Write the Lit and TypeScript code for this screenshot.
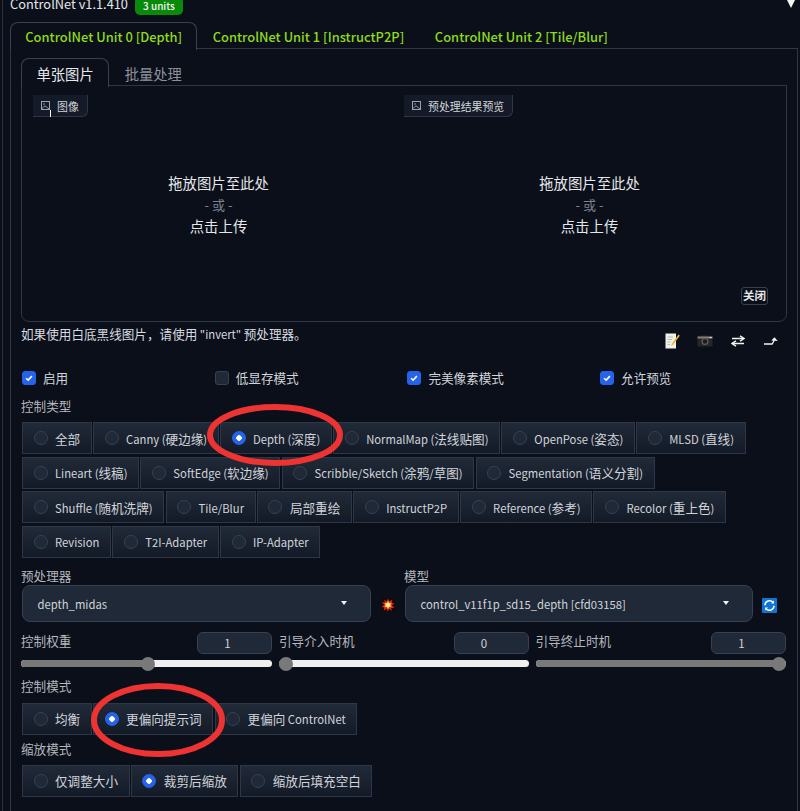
import { LitElement, html, css, svg } from "lit";
import { customElement } from "lit/decorators.js";

const typeRows = [
  ["全部", "Canny (硬边缘)", "Depth (深度)", "NormalMap (法线贴图)", "OpenPose (姿态)", "MLSD (直线)"],
  ["Lineart (线稿)", "SoftEdge (软边缘)", "Scribble/Sketch (涂鸦/草图)", "Segmentation (语义分割)"],
  ["Shuffle (随机洗牌)", "Tile/Blur", "局部重绘", "InstructP2P", "Reference (参考)", "Recolor (重上色)"],
  ["Revision", "T2I-Adapter", "IP-Adapter"],
];

/* Latin runs are set a little smaller than CJK runs, as in the reference. */
const mixed = (text: string) =>
  text
    .split(/([\x20-\x7e]+)/)
    .map((part, i) => (i % 2 ? html`<span class="lat">${part}</span>` : part));

const picIcon = svg`<svg class="pic" viewBox="0 0 10 10" width="10" height="10"><rect x=".5" y=".5" width="8" height="8" fill="none" stroke="#9ca3af" stroke-width="1"/><circle cx="3" cy="3" r=".8" fill="#9ca3af"/><path d="M1 7.500 L4 4.800 L8 8" fill="none" stroke="#9ca3af" stroke-width=".9"/></svg>`;

const boom = svg`<svg viewBox="0 0 14 14" width="14" height="14"><rect width="14" height="14" fill="#12090c"/><path d="M7 0.500 8.300 3.600 11.500 1.500 10.500 5 13.500 5.500 10.900 7.300 13.500 10 10 9.800 10.800 13 8 10.800 6.800 13.700 5.700 10.600 2.500 12.800 3.600 9.400 .5 9 3.300 7 .7 4.200 4.200 4.800 3 1.500 5.800 3.800Z" fill="#e0281f"/><path d="M7 2.800 8.300 5 10.700 4.800 9.600 7 10.700 9.200 8.300 9 7 11.200 5.700 9 3.300 9.200 4.400 7 3.300 4.800 5.700 5Z" fill="#ffb52e"/><circle cx="7" cy="7" r="2" fill="#fff3b8"/></svg>`;

const refresh = svg`<svg viewBox="0 0 15 15" width="15" height="15"><rect width="15" height="15" rx="1" fill="#1173d8"/><path d="M3 7.200A4.600 4.600 0 0 1 11 4.200" fill="none" stroke="#fff" stroke-width="1.500"/><path d="M12 2.400V5.600H8.900Z" fill="#fff"/><path d="M12 7.800A4.600 4.600 0 0 1 4 10.800" fill="none" stroke="#fff" stroke-width="1.500"/><path d="M3 12.600V9.400H6.100Z" fill="#fff"/></svg>`;

const memo = svg`<svg viewBox="0 0 16 16" width="16" height="16"><path d="M1.500 .5H12V15.500H1.500Z" fill="#f1f1ec"/><path d="M3.500 4H9M3.500 6.500H8M3.500 9H6.500M3.500 11.500H6" stroke="#a9a9a4" stroke-width=".8"/><path d="M14.500 1.500 8 10.500 6.800 13 9.300 11.500 15.800 2.800Z" fill="#f0b22e"/></svg>`;

const camera = svg`<svg viewBox="0 0 16 12" width="16" height="12"><path d="M0.500 1.500H3.500V.5H12.500V1.500H15.500V11.500H0.500Z" fill="#262628"/><rect x="0.500" y="1.500" width="15" height="2" fill="#8a7d76"/><circle cx="8" cy="6.500" r="3.600" fill="#5c5c60"/><circle cx="8" cy="6.500" r="2.200" fill="#1b1b1d"/><rect x="12.500" y="2" width="2" height="1" fill="#eee"/></svg>`;

const swap = svg`<svg viewBox="0 0 14 12" width="14" height="12"><path d="M1 3.500H12M2 8.500H13" fill="none" stroke="#f2f2f2" stroke-width="1.500"/><path d="M9 .8 13 3.500 9 6.200" fill="none" stroke="#f2f2f2" stroke-width="1.500"/><path d="M5 5.800 1 8.500 5 11.200" fill="none" stroke="#f2f2f2" stroke-width="1.500"/></svg>`;

const upArrow = svg`<svg viewBox="0 0 14 8" width="14" height="8"><path d="M0 7H8.200L10.300 3" fill="none" stroke="#f2f2f2" stroke-width="1.300"/><path d="M7.300 3.500 10.500 0.300 13.700 4Z" fill="#f2f2f2"/></svg>`;

@customElement("app-root")
export class AppRoot extends LitElement {
  static styles = css`
    :host {
      display: block;
      width: 800px;
      height: 811px;
      overflow: hidden;
      position: relative;
      background: #0b0f19;
      color: #e5e7eb;
      font-family: "Noto Sans CJK SC", "Noto Sans", sans-serif;
      font-size: 12.6px;
    }
    .lat { font-size: 0.895em; }
    .outer {
      margin-left: 2px;
      border-left: 1px solid #2b3140;
      padding-left: 7px;
      height: 811px;
      box-sizing: border-box;
    }
    .head {
      height: 22px;
      display: flex;
      align-items: flex-start;
      position: relative;
    }
    .title {
      font-size: 12.800px;
      line-height: 18px;
      margin-top: -5px;
      color: #e5e7eb;
    }
    .badge {
      margin-left: 7px;
      margin-top: -3px;
      width: 48px;
      height: 18px;
      border-radius: 5px;
      background: #0a8a0a;
      color: #f3f4f6;
      font-size: 10px;
      font-weight: 500;
      line-height: 18px;
      text-align: center;
    }
    .tri {
      margin-left: auto;
      margin-right: 5px;
      width: 0;
      height: 0;
      border-left: 4.500px solid transparent;
      border-right: 4.500px solid transparent;
      border-top: 8px solid #f5f5f5;
    }
    .tabs {
      display: flex;
      height: 27px;
      margin-bottom: -1px;
      position: relative;
      z-index: 1;
    }
    .tab {
      padding: 0 14.300px;
      font-size: 12.900px;
      font-weight: 500;
      line-height: 28px;
      color: #8edb1c;
      border: 1px solid transparent;
      border-bottom: none;
      white-space: nowrap;
      height: 28px;
      box-sizing: border-box;
    }
    .tab.on {
      border-color: #374151;
      border-radius: 8px 8px 0 0;
      background: #0b0f19;
    }
    .unit {
      width: 788px;
      height: 775px;
      box-sizing: border-box;
      border: 1px solid #2f3644;
      border-bottom: none;
      padding: 9px 10px 0;
    }
    .subtabs {
      display: flex;
      height: 28px;
      margin-bottom: -1px;
      position: relative;
      z-index: 1;
    }
    .subtab {
      padding: 0 14.500px;
      font-size: 14.300px;
      line-height: 29px;
      color: #8b919c;
      border: 1px solid transparent;
      border-bottom: none;
      height: 29px;
      box-sizing: border-box;
      white-space: nowrap;
    }
    .subtab.on {
      color: #e5e7eb;
      border-color: #374151;
      border-radius: 8px 8px 0 0;
      background: #0b0f19;
    }
    .drop {
      height: 237px;
      box-sizing: border-box;
      border: 1px solid #2f3644;
      border-radius: 0 0 8px 8px;
      padding: 9px 11px;
      display: grid;
      grid-template-columns: 371px 371px;
      position: relative;
    }
    .col {
      display: flex;
      flex-direction: column;
      position: relative;
    }
    .tag {
      align-self: flex-start;
      height: 22px;
      box-sizing: border-box;
      display: flex;
      align-items: center;
      gap: 6px;
      padding: 0 8px;
      font-size: 10.900px;
      color: #d1d5db;
      background: #141a27;
      border-right: 1px solid #2f3644;
      border-bottom: 1px solid #2f3644;
      border-radius: 0 0 6px 0;
      position: relative;
    }
    .pic { flex: none; }
    .cursor {
      position: absolute;
      left: 17px;
      top: 15px;
      width: 1px;
      height: 7px;
      background: #fff;
    }
    .hint {
      margin-top: 55px;
      text-align: center;
      font-size: 14.400px;
      line-height: 21.200px;
      color: #e5e7eb;
    }
    .hint .or {
      color: #7d838e;
      font-size: 13px;
    }
    .close {
      position: absolute;
      right: 18px;
      bottom: 16px;
      width: 27px;
      height: 18px;
      box-sizing: border-box;
      border: 1px solid #374151;
      border-radius: 3px;
      background: #0b0f19;
      font-size: 11.500px;
      font-weight: 700;
      line-height: 15px;
      text-align: center;
      color: #e5e7eb;
    }
    .noteRow {
      height: 45px;
      display: flex;
      justify-content: space-between;
    }
    .note {
      line-height: 18px;
      margin-top: 3px;
      color: #d8dbe0;
    }
    .tools {
      display: grid;
      grid-template-columns: repeat(4, 33px);
      justify-items: center;
      align-items: center;
      height: 18px;
      margin-top: 10px;
    }
    .checks {
      display: grid;
      grid-template-columns: repeat(4, 192.700px);
      height: 21px;
      margin-left: 1px;
    }
    .check {
      display: flex;
      align-items: center;
      gap: 7px;
      color: #d1d5db;
    }
    .box {
      width: 14px;
      height: 14px;
      border-radius: 3px;
      background: #1f2937;
      border: 1px solid #374151;
      box-sizing: border-box;
      display: flex;
      align-items: center;
      justify-content: center;
    }
    .box.on {
      background: #2563eb;
      border-color: #2563eb;
    }
    .lab {
      line-height: 18px;
      height: 18px;
      color: #b4b8bf;
      white-space: nowrap;
    }
    .typeLab { margin-top: 9px; margin-bottom: 7px; }
    .radios {
      display: flex;
      flex-wrap: wrap;
      gap: 2.500px 1.300px;
      margin-left: 1px;
    }
    .radio {
      height: 32px;
      box-sizing: border-box;
      display: flex;
      align-items: center;
      gap: 7.500px;
      padding: 0 10.600px 0 10.500px;
      border: 1px solid #2f3746;
      background: linear-gradient(#212a38, #131a27);
      color: #d1d5db;
      white-space: nowrap;
    }
    .dot {
      flex: none;
      width: 14px;
      height: 14px;
      border-radius: 50%;
      box-sizing: border-box;
      background: #1f2937;
      border: 1px solid #374151;
    }
    .dot.on {
      background: radial-gradient(circle, #fff 0 2.500px, #2563eb 3px);
      border-color: #2563eb;
    }
    .selects {
      display: grid;
      grid-template-columns: 383px 382px;
      margin-top: 9px;
    }
    .selCol { display: flex; flex-direction: column; }
    .selRow { display: flex; align-items: center; margin-left: 1px; }
    .select {
      width: 349px;
      height: 37px;
      box-sizing: border-box;
      background: #1f2937;
      border: 1px solid #374151;
      border-radius: 8px;
      display: flex;
      align-items: center;
      justify-content: space-between;
      padding: 0 23px 0 14.500px;
      color: #d1d5db;
      white-space: nowrap;
    }
    .caret {
      width: 0;
      height: 0;
      border-left: 3.500px solid transparent;
      border-right: 3.500px solid transparent;
      border-top: 4px solid #f3f4f6;
    }
    .selIcon {
      flex: none;
      width: 33px;
      display: flex;
      justify-content: center;
      padding-top: 4px;
    }
    .sliders {
      display: grid;
      grid-template-columns: 251px 249.500px 250.500px;
      column-gap: 7px;
      margin-top: 10px;
    }
    .sliderTop {
      display: flex;
      justify-content: space-between;
      align-items: flex-start;
      height: 22px;
    }
    .num {
      width: 75px;
      height: 22px;
      box-sizing: border-box;
      border: 1px solid #374151;
      border-radius: 6px;
      background: #1f2937;
      color: #d1d5db;
      font-size: 11.500px;
      line-height: 21px;
      text-align: center;
      padding-right: 14px;
    }
    .track {
      height: 7px;
      margin-top: 6.500px;
      border-radius: 4px;
      background: #f0f0f0;
      position: relative;
    }
    .fill {
      height: 100%;
      border-radius: 4px;
      background: #797979;
    }
    .thumb {
      position: absolute;
      top: -3.500px;
      width: 14px;
      height: 14px;
      border-radius: 50%;
      background: #797979;
      transform: translateX(-7px);
    }
    .modeLab { margin-top: 9.500px; margin-bottom: 8px; }
    .scaleLab { margin-top: 5px; margin-bottom: 7px; }
    .marks {
      position: absolute;
      inset: 0;
      pointer-events: none;
    }
  `;

  private radio(label: string, on = false) {
    return html`<div class="radio"><span class="dot ${on ? "on" : ""}"></span><span>${mixed(label)}</span></div>`;
  }

  private check(label: string, on = true) {
    return html`<div class="check">
      <span class="box ${on ? "on" : ""}">
        ${on
          ? svg`<svg viewBox="0 0 14 14" width="14" height="14"><path d="M3.600 7.300 6 9.500 10.400 4.800" fill="none" stroke="#fff" stroke-width="1.800"/></svg>`
          : ""}
      </span>
      <span>${label}</span>
    </div>`;
  }

  private slider(label: string, value: string, pct: number) {
    return html`<div>
      <div class="sliderTop"><span class="lab">${label}</span><span class="num">${value}</span></div>
      <div class="track">
        <div class="fill" style="width:${pct}%"></div>
        <div class="thumb" style="left:${pct}%"></div>
      </div>
    </div>`;
  }

  render() {
    return html`
      <div class="outer">
        <div class="head">
          <span class="title">ControlNet v1.1.410</span>
          <span class="badge">3 units</span>
          <span class="tri"></span>
        </div>
        <div class="tabs">
          <div class="tab on">ControlNet Unit 0 [Depth]</div>
          <div class="tab">ControlNet Unit 1 [InstructP2P]</div>
          <div class="tab">ControlNet Unit 2 [Tile/Blur]</div>
        </div>
        <div class="unit">
          <div class="subtabs">
            <div class="subtab on">单张图片</div>
            <div class="subtab">批量处理</div>
          </div>
          <div class="drop">
            <div class="col">
              <div class="tag">${picIcon}<span>图像</span><i class="cursor"></i></div>
              <div class="hint">拖放图片至此处<br /><span class="or">- 或 -</span><br />点击上传</div>
            </div>
            <div class="col">
              <div class="tag">${picIcon}<span>预处理结果预览</span></div>
              <div class="hint">拖放图片至此处<br /><span class="or">- 或 -</span><br />点击上传</div>
            </div>
            <div class="close">关闭</div>
          </div>
          <div class="noteRow">
            <div class="note">${mixed('如果使用白底黑线图片，请使用 "invert" 预处理器。')}</div>
            <div class="tools">${memo}${camera}${swap}${upArrow}</div>
          </div>
          <div class="checks">
            ${this.check("启用")}
            ${this.check("低显存模式", false)}
            ${this.check("完美像素模式")}
            ${this.check("允许预览")}
          </div>
          <div class="lab typeLab">控制类型</div>
          <div class="radios">
            ${typeRows.flat().map((t) => this.radio(t, t.startsWith("Depth")))}
          </div>
          <div class="selects">
            <div class="selCol">
              <div class="lab">预处理器</div>
              <div class="selRow">
                <div class="select"><span>${mixed("depth_midas")}</span><i class="caret"></i></div>
                <div class="selIcon">${boom}</div>
              </div>
            </div>
            <div class="selCol">
              <div class="lab">模型</div>
              <div class="selRow">
                <div class="select"><span>${mixed("control_v11f1p_sd15_depth [cfd03158]")}</span><i class="caret"></i></div>
                <div class="selIcon">${refresh}</div>
              </div>
            </div>
          </div>
          <div class="sliders">
            ${this.slider("控制权重", "1", 50.400)}
            ${this.slider("引导介入时机", "0", 2.700)}
            ${this.slider("引导终止时机", "1", 97.200)}
          </div>
          <div class="lab modeLab">控制模式</div>
          <div class="radios">
            ${this.radio("均衡")}${this.radio("更偏向提示词", true)}${this.radio("更偏向 ControlNet")}
          </div>
          <div class="lab scaleLab">缩放模式</div>
          <div class="radios">
            ${this.radio("仅调整大小")}${this.radio("裁剪后缩放", true)}${this.radio("缩放后填充空白")}
          </div>
        </div>
      </div>
      <svg class="marks" viewBox="0 0 800 811" width="800" height="811">
        <ellipse cx="275" cy="435" rx="65" ry="28" fill="none" stroke="#ee3333" stroke-width="6" />
        <ellipse cx="158" cy="720" rx="64" ry="34" fill="none" stroke="#ee3333" stroke-width="6" />
      </svg>
    `;
  }
}
